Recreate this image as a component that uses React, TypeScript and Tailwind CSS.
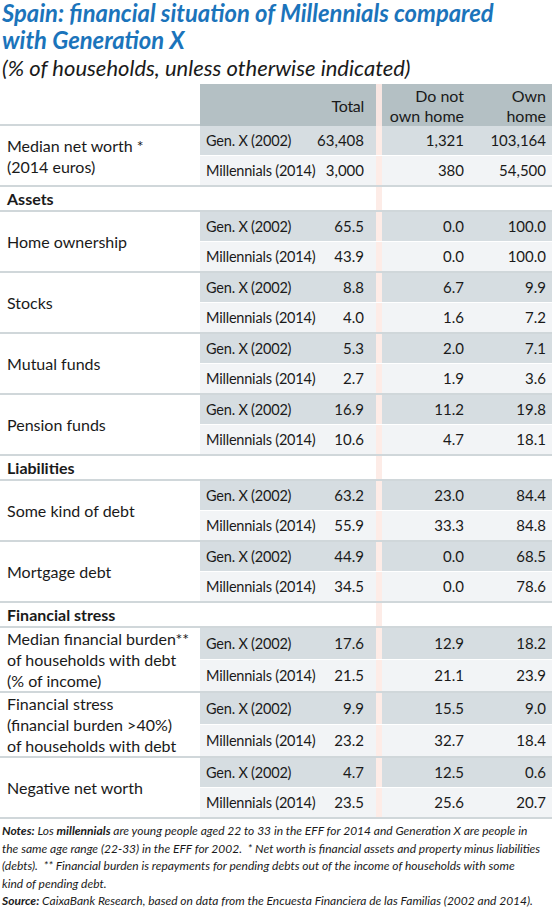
const font = { fontFamily: "Lato, 'Noto Sans', sans-serif" };

type Group = { label: string[]; rows: [string, string, string, string][] };

const GX = "Gen. X (2002)";
const MI = "Millennials (2014)";

const sections: { title?: string; groups: Group[] }[] = [
  {
    groups: [
      {
        label: ["Median net worth *", "(2014 euros)"],
        rows: [
          [GX, "63,408", "1,321", "103,164"],
          [MI, "3,000", "380", "54,500"],
        ],
      },
    ],
  },
  {
    title: "Assets",
    groups: [
      { label: ["Home ownership"], rows: [[GX, "65.5", "0.0", "100.0"], [MI, "43.9", "0.0", "100.0"]] },
      { label: ["Stocks"], rows: [[GX, "8.8", "6.7", "9.9"], [MI, "4.0", "1.6", "7.2"]] },
      { label: ["Mutual funds"], rows: [[GX, "5.3", "2.0", "7.1"], [MI, "2.7", "1.9", "3.6"]] },
      { label: ["Pension funds"], rows: [[GX, "16.9", "11.2", "19.8"], [MI, "10.6", "4.7", "18.1"]] },
    ],
  },
  {
    title: "Liabilities",
    groups: [
      { label: ["Some kind of debt"], rows: [[GX, "63.2", "23.0", "84.4"], [MI, "55.9", "33.3", "84.8"]] },
      { label: ["Mortgage debt"], rows: [[GX, "44.9", "0.0", "68.5"], [MI, "34.5", "0.0", "78.6"]] },
    ],
  },
  {
    title: "Financial stress",
    groups: [
      {
        label: ["Median financial burden**", "of households with debt", "(% of income)"],
        rows: [[GX, "17.6", "12.9", "18.2"], [MI, "21.5", "21.1", "23.9"]],
      },
      {
        label: ["Financial stress", "(financial burden >40%)", "of households with debt"],
        rows: [[GX, "9.9", "15.5", "9.0"], [MI, "23.2", "32.7", "18.4"]],
      },
      { label: ["Negative net worth"], rows: [[GX, "4.7", "12.5", "0.6"], [MI, "23.5", "25.6", "20.7"]] },
    ],
  },
];

function DataRow({ row, dark }: { row: [string, string, string, string]; dark: boolean }) {
  const bg = dark ? "bg-[#d6dde1]" : "bg-[#f2f4f6]";
  return (
    <div className={`flex flex-1 text-[15px] ${dark ? "border-b border-white" : ""}`}>
      <div className={`w-[176px] flex items-center justify-between pl-[6px] pr-[12px] ${bg}`}>
        <span className="text-[14.5px] tracking-[-0.2px]">{row[0]}</span>
        <span>{row[1]}</span>
      </div>
      <div className="w-[6px] bg-[#fdece7]" />
      <div className={`w-[86px] flex items-center justify-end pr-[4px] ${bg}`}>{row[2]}</div>
      <div className={`flex-1 flex items-center justify-end pr-[6px] ${bg}`}>{row[3]}</div>
    </div>
  );
}

export default function App() {
  return (
    <div className="w-[552px] h-[910px] bg-white text-[#1a1a1a] overflow-hidden" style={font}>
      <div className="pl-[2px]">
        <h1 className="text-[23.8px] leading-[27px] font-bold italic text-[#1b74bb]">
          Spain: financial situation of Millennials compared
          <br />
          with Generation X
        </h1>
        <p className="text-[22px] leading-[27px] italic text-[#1a1a1a]">
          (% of households, unless otherwise indicated)
        </p>
      </div>

      <div className="mt-[3px] text-[16px] whitespace-nowrap">
        {/* header */}
        <div className="flex h-[42px]">
          <div className="w-[200px] border-b-2 border-[#d0d7da]" />
          <div className="w-[176px] bg-[#b4c0c4] flex items-end justify-end pr-[12px] pb-[8px] tracking-[-0.3px]">Total</div>
          <div className="w-[6px] bg-[#f8e6e2]" />
          <div className="w-[86px] bg-[#b4c0c4] flex items-end justify-end pr-[4px] text-right leading-[20px]">
            Do not
            <br />
            own home
          </div>
          <div className="flex-1 bg-[#b4c0c4] flex items-end justify-end pr-[6px] text-right leading-[20px]">
            Own
            <br />
            home
          </div>
        </div>

        {sections.map((s, si) => (
          <div key={si}>
            {s.title && (
              <div className="flex h-[25px] border-b-2 border-[#d0d7da]">
                <div className="w-[200px] pl-[7px] font-bold flex items-center">{s.title}</div>
                <div className="w-[176px]" />
                <div className="w-[6px] bg-[#fdece7]" />
              </div>
            )}
            {s.groups.map((g, gi) => (
              <div key={gi} className="flex min-h-[61px] border-b-2 border-[#d0d7da]">
                <div className="w-[200px] pl-[7px] flex flex-col justify-center leading-[21px]">
                  {g.label.map((l) => (
                    <span key={l}>{l}</span>
                  ))}
                </div>
                <div className="flex-1 flex flex-col">
                  <DataRow row={g.rows[0]} dark />
                  <DataRow row={g.rows[1]} dark={false} />
                </div>
              </div>
            ))}
          </div>
        ))}
      </div>

      <div className="pl-[2px] pt-[3px] text-[12px] leading-[17.5px] italic whitespace-nowrap">
        <p>
          <b>Notes:</b> Los <b>millennials</b> are young people aged 22 to 33 in the EFF for 2014 and Generation X are people in
          <br />
          the same age range (22-33) in the EFF for 2002. &nbsp;* Net worth is financial assets and property minus liabilities
          <br />
          (debts). &nbsp;** Financial burden is repayments for pending debts out of the income of households with some
          <br />
          kind of pending debt.
        </p>
        <p>
          <b>Source:</b> CaixaBank Research, based on data from the Encuesta Financiera de las Familias (2002 and 2014).
        </p>
      </div>
    </div>
  );
}
